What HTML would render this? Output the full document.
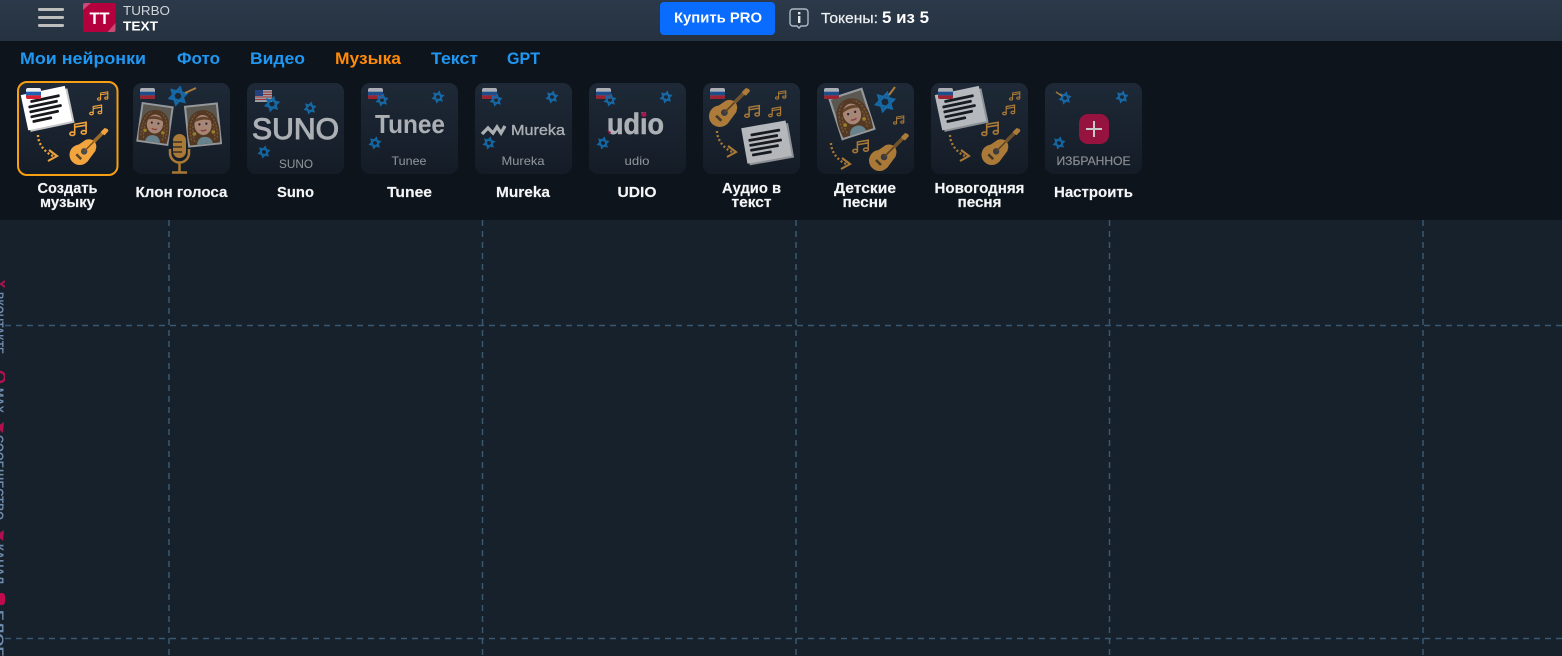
<!DOCTYPE html>
<html lang="ru"><head><meta charset="utf-8"><title>Turbotext</title>
<style>
html,body{margin:0;padding:0;background:#16212b;width:1562px;height:656px;overflow:hidden}
svg{display:block}
text{font-family:"Liberation Sans",sans-serif}
.l{font-weight:700;font-size:14.5px;fill:#f4f5f6;stroke:#f4f5f6;stroke-width:.15;text-anchor:middle}
.n{font-weight:700;font-size:17px}
.s{font-size:12px;fill:#cdd0d3;text-anchor:middle}
.v{font-size:12px;fill:#6f8cae;font-weight:700}
</style></head><body>
<svg xmlns="http://www.w3.org/2000/svg" width="1562" height="656" viewBox="0 0 1562 656">
<defs>
<linearGradient id="hd" x1="0" y1="0" x2="0" y2="1"><stop offset="0" stop-color="#2b394a"/><stop offset="1" stop-color="#253240"/></linearGradient>
<linearGradient id="tl" x1="0" y1="0" x2="0" y2="1"><stop offset="0" stop-color="#1e2937"/><stop offset="1" stop-color="#141c26"/></linearGradient>
<symbol id="gt" viewBox="0 0 40 40">
<path d="M20 20L35 5" stroke="#9a6a2a" stroke-width="3.600"/><path d="M33.500 7l-1.500-2 4-4 3 1 1 2-4 4.500z" fill="#f2a53f"/>
<circle cx="10.500" cy="28.500" r="10.500" fill="#f2a53f"/><circle cx="20" cy="20" r="7.500" fill="#f2a53f"/>
<path d="M5 21L17 13 27 24 18 36z" fill="#f2a53f"/>
<circle cx="15" cy="25" r="3.300" fill="#464a4e"/><path d="M7 28l5 5" stroke="#5a4526" stroke-width="2.600"/><path d="M15 25L25 15" stroke="#7a5220" stroke-width="1.600"/>
</symbol>
<symbol id="nt" viewBox="0 0 20 16">
<g fill="none" stroke="#f0a33c" stroke-width="1.700"><path d="M6 13V3L18 1V11M6 6L18 4"/><ellipse cx="3.500" cy="13" rx="2.600" ry="1.800"/><ellipse cx="15.500" cy="11.500" rx="2.600" ry="1.800"/></g>
</symbol>
<g id="pp"><rect x="-21" y="-15" width="45" height="35" fill="#c5c6c8"/><rect x="-23" y="-18" width="45" height="36" fill="#fff"/>
<g fill="#17191c"><rect x="-15" y="-11" width="30" height="2.800" rx="1"/><rect x="-18" y="-6" width="30" height="2.800" rx="1"/><rect x="-18" y="-1" width="33" height="2.800" rx="1"/><rect x="-18" y="4" width="29" height="2.800" rx="1"/><rect x="-17" y="9" width="20" height="2.800" rx="1"/></g></g>
<g id="st"><g transform="rotate(14)" fill="none" stroke="#1488dc" stroke-width="1.500"><path d="M0-5.300L4.600 2.600H-4.600Z"/><path d="M0 5.300L-4.600-2.600H4.600Z"/></g></g>
<g id="ru"><rect width="15" height="11" rx="2" fill="#eef0f2"/><path d="M0 3.700h15v3.700H0z" fill="#1f5fb4"/><path d="M0 7.400h15V9a2 2 0 0 1-2 2H2a2 2 0 0 1-2-2z" fill="#d8202e"/></g>
<g id="ar"><path d="M0 0c0 8 6 17 15 21" fill="none" stroke="#f0a33c" stroke-width="2.300" stroke-dasharray="2 2.200"/><path d="M11 15l8 6-9 5" fill="none" stroke="#f0a33c" stroke-width="2.100"/></g>
<g id="ph"><rect x="-17" y="-21" width="34" height="42" fill="#cfd0cf"/><rect x="-15" y="-19" width="30" height="38" fill="#77705f"/>
<path d="M-15 19c-2-14-2-33 15-34 17 1 17 20 15 34z" fill="#6f4420"/>
<g fill="none" stroke="#a5703a" stroke-width="1.300" stroke-dasharray="2 1.500"><path d="M-13 14c-1-10 0-22 8-26M13 14c1-10 0-22-8-26M-10 16c-1-6-1-12 0-16M10 16c1-6 1-12 0-16"/></g>
<ellipse cx="0" cy="0" rx="8.500" ry="10" fill="#eab596"/><path d="M-9-3c2-7 16-7 18 0-4-3-13-3-18 0z" fill="#855127"/>
<circle cx="-3.500" cy="-1" r="1.100" fill="#223"/><circle cx="3.500" cy="-1" r="1.100" fill="#223"/><path d="M-2.800 5q2.800 1.700 5.600 0" stroke="#c04a4a" stroke-width="1.300" fill="none"/>
<path d="M-8 19c1-5 4-7 8-7s7 2 8 7z" fill="#8bb0bb"/><circle cx="-9.500" cy="8" r="1.800" fill="#d4a82a"/><circle cx="9.500" cy="8" r="1.800" fill="#d4a82a"/></g>
<clipPath id="side"><rect x="0" y="220" width="5" height="436"/></clipPath>
</defs>

<!-- backgrounds -->
<rect width="1562" height="656" fill="#16212b"/>
<rect width="1562" height="41" fill="url(#hd)"/>
<rect y="41" width="1562" height="179" fill="#0d141c"/>

<!-- grid -->
<g stroke="#3a5870" stroke-width="1.500" stroke-dasharray="6 5" fill="none">
<path d="M169 220V656M482.500 220V656M796 220V656M1109.500 220V656M1423 220V656"/>
<path d="M5 325.500H1562M5 638.500H1562"/>
</g>

<!-- sidebar -->
<g clip-path="url(#side)">
<path d="M5 281l-4 3 4 3" fill="none" stroke="#b0104e" stroke-width="2"/>
<text class="v" transform="translate(-5,292) rotate(90)" textLength="62" lengthAdjust="spacingAndGlyphs">ВКОНТАКТЕ</text>
<circle cx="0" cy="377" r="5" fill="none" stroke="#b0104e" stroke-width="2.400"/>
<text class="v" transform="translate(-5,388) rotate(90)" textLength="25" lengthAdjust="spacingAndGlyphs">MAX</text>
<path d="M-4 427l8-5-1 11z" fill="#b0104e"/>
<text class="v" transform="translate(-5,435) rotate(90)" textLength="85" lengthAdjust="spacingAndGlyphs">СООБЩЕСТВО</text>
<path d="M-4 535l8-5-1 11z" fill="#b0104e"/>
<text class="v" transform="translate(-5,544) rotate(90)" textLength="40" lengthAdjust="spacingAndGlyphs">КАНАЛ</text>
<rect x="-6" y="593" width="11" height="12" rx="3" fill="#c00a4e"/>
<text class="v" transform="translate(-5,610) rotate(90)" textLength="46" lengthAdjust="spacingAndGlyphs">БЛОГ</text>
</g>

<!-- header -->
<g fill="#bdbdbd"><rect x="38" y="8" width="26" height="3" rx="1.200"/><rect x="38" y="16" width="26" height="3" rx="1.200"/><rect x="38" y="24" width="26" height="3" rx="1.200"/></g>
<rect x="83" y="3" width="32.500" height="29" rx="2" fill="#b5003e"/>
<path d="M83 10V5a2 2 0 0 1 2-2h6z" fill="#c84a75"/><path d="M115.500 23v7a2 2 0 0 1-2 2h-6z" fill="#c84a75"/>
<text x="99.500" y="24" font-size="17" font-weight="700" fill="#fff" text-anchor="middle" textLength="20" lengthAdjust="spacingAndGlyphs">TT</text>
<text x="123" y="15" font-size="13" fill="#cfd4d9" textLength="47" lengthAdjust="spacingAndGlyphs">TURBO</text>
<text x="123" y="30.500" font-size="13" font-weight="700" fill="#fff" textLength="35" lengthAdjust="spacingAndGlyphs">TEXT</text>

<rect x="660" y="2" width="115" height="33" rx="4" fill="#0a6cff"/>
<text x="718" y="22.500" font-size="14.500" font-weight="700" fill="#fff" text-anchor="middle" textLength="88" lengthAdjust="spacingAndGlyphs">Купить PRO</text>
<path d="M793 9h12a3 3 0 0 1 3 3v11a3 3 0 0 1-3 3h-4l-2 2-2-2h-4a3 3 0 0 1-3-3V12a3 3 0 0 1 3-3z" fill="none" stroke="#aeb8c4" stroke-width="1.400"/>
<rect x="798" y="16" width="2.400" height="7" fill="#e6e9ec"/><rect x="798" y="12" width="2.400" height="2.400" fill="#e6e9ec"/>
<text x="821" y="23" font-size="14.500" fill="#eef0f2" stroke="#eef0f2" stroke-width=".2" textLength="57" lengthAdjust="spacingAndGlyphs">Токены:</text>
<text x="882" y="23" font-size="17" font-weight="700" fill="#fff" textLength="47" lengthAdjust="spacingAndGlyphs">5 из 5</text>

<!-- nav -->
<text class="n" x="20" y="64" fill="#2098f3" textLength="126" lengthAdjust="spacingAndGlyphs">Мои нейронки</text>
<text class="n" x="177" y="64" fill="#2098f3" textLength="43" lengthAdjust="spacingAndGlyphs">Фото</text>
<text class="n" x="250" y="64" fill="#2098f3" textLength="55" lengthAdjust="spacingAndGlyphs">Видео</text>
<text class="n" x="335" y="64" fill="#ff8a0a" textLength="66" lengthAdjust="spacingAndGlyphs">Музыка</text>
<text class="n" x="431" y="64" fill="#2098f3" textLength="47" lengthAdjust="spacingAndGlyphs">Текст</text>
<text class="n" x="507" y="64" fill="#2098f3" textLength="33" lengthAdjust="spacingAndGlyphs">GPT</text>

<!-- tiles -->
<g fill="url(#tl)">
<rect x="133" y="83" width="97" height="91" rx="9"/><rect x="247" y="83" width="97" height="91" rx="9"/><rect x="361" y="83" width="97" height="91" rx="9"/><rect x="475" y="83" width="97" height="91" rx="9"/><rect x="589" y="83" width="97" height="91" rx="9"/><rect x="703" y="83" width="97" height="91" rx="9"/><rect x="817" y="83" width="97" height="91" rx="9"/><rect x="931" y="83" width="97" height="91" rx="9"/><rect x="1045" y="83" width="97" height="91" rx="9"/>
</g>
<rect x="18" y="82" width="99.500" height="93" rx="9" fill="url(#tl)" stroke="#f79f12" stroke-width="2"/>

<!-- tile 1 -->
<use href="#pp" transform="translate(47,108) rotate(-12)"/>
<use href="#ru" x="26" y="88"/>
<use href="#nt" x="97" y="91" width="12" height="10"/>
<use href="#nt" x="89" y="104" width="14" height="12"/>
<use href="#nt" x="69" y="121" width="19" height="16"/>
<use href="#ar" x="38" y="135"/>
<use href="#gt" x="69" y="127" width="40" height="39"/>

<!-- dimmed tiles -->
<g opacity=".68">
<!-- clone -->
<use href="#ph" transform="translate(155,124) rotate(8) scale(.95)"/>
<use href="#ph" transform="translate(203,125) rotate(-6) scale(1)"/>
<use href="#ru" x="140" y="88"/>
<use href="#st" transform="translate(178,96) scale(1.600)"/>
<path d="M185 93L196 88" stroke="#f0a33c" stroke-width="1.800"/>
<g fill="none" stroke="#f0a33c" stroke-width="2.500"><path d="M170 149v4a9.500 9.500 0 0 0 19 0v-4M179.500 163v9M172 172.500h15"/></g>
<rect x="173" y="134" width="13" height="24" rx="6.500" fill="#f0a33c"/>
<path d="M173 142h9M173 147h9M173 152h9" stroke="#222" stroke-width="1.300"/>

<!-- suno -->
<rect x="255" y="90" width="17" height="12" fill="#d8d8dc"/>
<path d="M255 92h17M255 94.500h17M255 97h17M255 99.500h17" stroke="#d83a3a" stroke-width="1.100"/>
<rect x="255" y="90" width="8" height="6" fill="#2a4d9c"/>
<use href="#st" transform="translate(272,104) scale(1.250)"/>
<use href="#st" x="310" y="108"/>
<use href="#st" x="264" y="152"/>
<text x="252" y="139" font-size="30" fill="#f2f3f4" stroke="#f2f3f4" stroke-width="1" textLength="87" lengthAdjust="spacingAndGlyphs">SUNO</text>
<text class="s" x="296" y="168" textLength="34" lengthAdjust="spacingAndGlyphs">SUNO</text>

<!-- tunee -->
<use href="#ru" x="368" y="88"/>
<use href="#st" x="382" y="100"/><use href="#st" x="438" y="97"/><use href="#st" x="375" y="143"/>
<text x="375" y="133" font-size="26" font-weight="700" fill="#f2f3f4" textLength="70" lengthAdjust="spacingAndGlyphs">Tunee</text>
<text class="s" x="409" y="165" textLength="35" lengthAdjust="spacingAndGlyphs">Tunee</text>

<!-- mureka -->
<use href="#ru" x="482" y="88"/>
<use href="#st" x="496" y="100"/><use href="#st" x="552" y="97"/><use href="#st" x="489" y="143"/>
<path d="M482 134l6-6 5 5 4-6 4 6 4-7" fill="none" stroke="#f2f3f4" stroke-width="3.300"/>
<text x="511" y="135" font-size="15" fill="#f2f3f4" stroke="#f2f3f4" stroke-width=".3" textLength="54" lengthAdjust="spacingAndGlyphs">Mureka</text>
<text class="s" x="523" y="165" textLength="43" lengthAdjust="spacingAndGlyphs">Mureka</text>

<!-- udio -->
<use href="#ru" x="596" y="88"/>
<use href="#st" x="610" y="100"/><use href="#st" x="666" y="97"/><use href="#st" x="603" y="143"/>
<text x="607" y="134" font-size="30" font-weight="700" fill="#f2f3f4" stroke="#f2f3f4" stroke-width=".5" textLength="57" lengthAdjust="spacingAndGlyphs">udio</text>
<circle cx="644" cy="114.500" r="2.500" fill="#e0105c"/>
<path d="M607 130l4 2-1 3z" fill="#e0105c"/>
<text class="s" x="637" y="165" textLength="25" lengthAdjust="spacingAndGlyphs">udio</text>

<!-- audio -->
<use href="#gt" x="709" y="87" width="41" height="41"/>
<use href="#ru" x="710" y="88"/>
<use href="#nt" x="775" y="90" width="12" height="10"/>
<use href="#nt" x="744" y="104" width="17" height="15"/>
<use href="#nt" x="768" y="106" width="14" height="12"/>
<use href="#ar" x="717" y="131"/>
<use href="#pp" transform="translate(767,142) rotate(-10)"/>

<!-- kids -->
<use href="#ph" transform="translate(852,114) rotate(-18) scale(1.050)"/>
<use href="#ru" x="824" y="88"/>
<use href="#st" transform="translate(885,102) scale(1.700)"/>
<path d="M889 95L895 87" stroke="#f0a33c" stroke-width="2"/>
<use href="#nt" x="893" y="115" width="12" height="10"/>
<use href="#nt" x="852" y="139" width="18" height="15"/>
<use href="#ar" x="831" y="143"/>
<use href="#gt" x="869" y="132" width="40" height="40"/>

<!-- new year -->
<use href="#pp" transform="translate(961,108) rotate(-12)"/>
<use href="#ru" x="938" y="88"/>
<use href="#nt" x="1009" y="91" width="12" height="10"/>
<use href="#nt" x="1002" y="104" width="14" height="12"/>
<use href="#nt" x="981" y="121" width="19" height="16"/>
<use href="#ar" x="950" y="135"/>
<use href="#gt" x="981" y="127" width="40" height="39"/>

<!-- fav -->
<use href="#st" x="1065" y="98"/>
<path d="M1056 92L1062 96" stroke="#f0a33c" stroke-width="1.400"/>
<use href="#st" x="1122" y="97"/><use href="#st" x="1059" y="143"/>
</g>
<rect x="1079" y="114" width="30" height="30" rx="9" fill="#96123f"/>
<path d="M1094 121v16M1086 129h16" stroke="#c9c9c9" stroke-width="2"/>
<text x="1093.500" y="165" font-size="12" fill="#8a8d91" stroke="#8a8d91" stroke-width=".2" text-anchor="middle" textLength="74" lengthAdjust="spacingAndGlyphs">ИЗБРАННОЕ</text>

<!-- labels -->
<text class="l" x="67.500" y="193" textLength="60" lengthAdjust="spacingAndGlyphs">Создать</text>
<text class="l" x="67.500" y="207" textLength="55" lengthAdjust="spacingAndGlyphs">музыку</text>
<text class="l" x="181.500" y="197" textLength="92" lengthAdjust="spacingAndGlyphs">Клон голоса</text>
<text class="l" x="295.500" y="197" textLength="37" lengthAdjust="spacingAndGlyphs">Suno</text>
<text class="l" x="409.500" y="197" textLength="45" lengthAdjust="spacingAndGlyphs">Tunee</text>
<text class="l" x="523" y="197" textLength="54" lengthAdjust="spacingAndGlyphs">Mureka</text>
<text class="l" x="637" y="197" textLength="39" lengthAdjust="spacingAndGlyphs">UDIO</text>
<text class="l" x="751.500" y="193" textLength="59" lengthAdjust="spacingAndGlyphs">Аудио в</text>
<text class="l" x="751.500" y="207" textLength="40" lengthAdjust="spacingAndGlyphs">текст</text>
<text class="l" x="865" y="193" textLength="62" lengthAdjust="spacingAndGlyphs">Детские</text>
<text class="l" x="865" y="207" textLength="45" lengthAdjust="spacingAndGlyphs">песни</text>
<text class="l" x="979.500" y="193" textLength="90" lengthAdjust="spacingAndGlyphs">Новогодняя</text>
<text class="l" x="979.500" y="207" textLength="44" lengthAdjust="spacingAndGlyphs">песня</text>
<text class="l" x="1093.500" y="197" textLength="79" lengthAdjust="spacingAndGlyphs">Настроить</text>
</svg>
</body></html>
